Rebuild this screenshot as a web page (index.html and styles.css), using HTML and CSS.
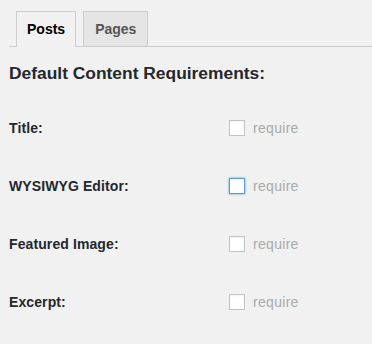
FILE: index.html
```html
<!DOCTYPE html>
<html>
	<head>
		<meta charset="utf-8" />
		<title>Content Requirements</title>
		<link rel="stylesheet" href="styles.css">
	</head>
	<body>
		<div class="wrap">
			<ul class="tabs">
				<li class="tab active">Posts</li>
				<li class="tab">Pages</li>
			</ul>
			<h2 class="title">Default Content Requirements:</h2>
			<div class="rows">
				<div class="row">
					<span class="label">Title:</span>
					<label class="opt"><input type="checkbox" disabled> require</label>
				</div>
				<div class="row">
					<span class="label">WYSIWYG Editor:</span>
					<label class="opt"><input type="checkbox" class="focus" disabled> require</label>
				</div>
				<div class="row">
					<span class="label">Featured Image:</span>
					<label class="opt"><input type="checkbox" disabled> require</label>
				</div>
				<div class="row">
					<span class="label">Excerpt:</span>
					<label class="opt"><input type="checkbox" disabled> require</label>
				</div>
			</div>
		</div>
	</body>
</html>
```

FILE: styles.css
```css
body{
	margin:0;
	background:#f1f1f1;
	font-family:"Liberation Sans", Arial, sans-serif;
	font-size:14px;
	color:#23282d;
}
ul,li{margin:0;padding:0;list-style:none;}

.wrap{
	padding:11px 0 0 9px;
}

.tabs{
	display:flex;
	gap:7px;
	padding-left:7px;
	border-bottom:1px solid #ccc;
}
.tab{
	height:34px;
	line-height:34px;
	padding:0 11px;
	border:1px solid #ccc;
	border-bottom:none;
	background:#e5e5e5;
	color:#555;
	font-weight:bold;
}
.tab.active{
	background:#f1f1f1;
	color:#000;
	height:35px;
	margin-bottom:-1px;
	padding:0 10px;
}

.title{
	margin:15px 0 0;
	font-size:17.4px;
	line-height:22px;
	font-weight:bold;
	color:#23282d;
}

.rows{
	margin-top:15px;
}
.row{
	display:grid;
	grid-template-columns:220px auto;
	align-items:center;
	height:58px;
}
.label{
	font-weight:bold;
	line-height:18px;
	letter-spacing:0.1px;
}
.opt{
	display:flex;
	align-items:center;
	gap:8px;
	color:#aaa;
	letter-spacing:0.3px;
}
.opt input{
	-webkit-appearance:none;
	appearance:none;
	width:16px;
	height:16px;
	margin:0;
	background:#fff;
	border:1px solid #c3c3c3;
	box-shadow:inset 0 1px 2px rgba(0,0,0,0.05);
}
.opt input.focus{
	border-color:#5b9dd9;
	box-shadow:0 0 2px rgba(30,140,190,0.8);
}
```
